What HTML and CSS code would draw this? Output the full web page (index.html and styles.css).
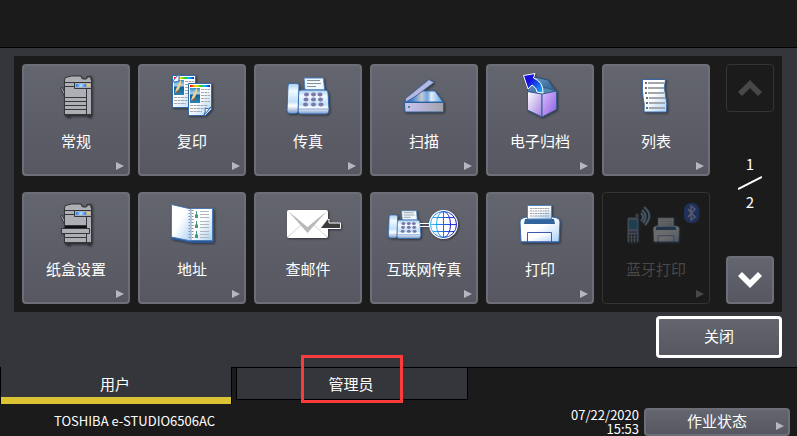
FILE: index.html
```html
<!DOCTYPE html>
<html lang="zh-CN">
<head>
<meta charset="utf-8">
<meta name="viewport" content="width=device-width, initial-scale=1">
<title>用户功能</title>
<link rel="stylesheet" href="styles.css">
</head>
<body>
<svg class="defs" aria-hidden="true">
  <defs>
    <linearGradient id="paper" x2="1" y2="1"><stop offset=".45" stop-color="#fff"/><stop offset="1" stop-color="#a9d0f5"/></linearGradient>
    <linearGradient id="shell" x2="0" y2="1"><stop offset="0" stop-color="#a9cdf2"/><stop offset=".25" stop-color="#f2faff"/><stop offset=".6" stop-color="#c2e0fb"/><stop offset=".75" stop-color="#fff"/><stop offset="1" stop-color="#7596c9"/></linearGradient>
    <linearGradient id="screen"><stop offset="0" stop-color="#2877ed"/><stop offset=".5" stop-color="#b3dcff"/><stop offset="1" stop-color="#2877ed"/></linearGradient>
    <linearGradient id="rainbow"><stop offset="0" stop-color="#f20000"/><stop offset=".3" stop-color="#ffe500"/><stop offset=".55" stop-color="#20cd32"/><stop offset=".75" stop-color="#00bfff"/><stop offset="1" stop-color="#1522dd"/></linearGradient>
    <linearGradient id="glass"><stop offset="0" stop-color="#1c6ad2"/><stop offset=".2" stop-color="#3d80ce"/><stop offset=".45" stop-color="#c5c9cf"/><stop offset=".6" stop-color="#71a5e5"/><stop offset=".7" stop-color="#e2edf8"/><stop offset="1" stop-color="#5e9be2"/></linearGradient>
    <linearGradient id="base"><stop offset="0" stop-color="#c9c3f5"/><stop offset="1" stop-color="#a2a3ac"/></linearGradient>
    <linearGradient id="boxLeft" x2="1" y2="1"><stop offset="0" stop-color="#fff"/><stop offset="1" stop-color="#a27ee0"/></linearGradient>
    <linearGradient id="boxRight" x2="1" y2="1"><stop offset="0" stop-color="#dac0ff"/><stop offset="1" stop-color="#8d5ae0"/></linearGradient>
    <linearGradient id="boxTop" x2="1" y2="1"><stop offset="0" stop-color="#6ca5d6"/><stop offset="1" stop-color="#294d7c"/></linearGradient>
    <linearGradient id="arrow" x2="1" y2="1"><stop offset=".35" stop-color="#1610dc"/><stop offset="1" stop-color="#16baff"/></linearGradient>
    <linearGradient id="globe"><stop offset="0" stop-color="#28b8f5"/><stop offset="1" stop-color="#1b12c6"/></linearGradient>
    <linearGradient id="sea" x2="0" y2="1"><stop offset="0" stop-color="#358ac3"/><stop offset=".35" stop-color="#a9d6ee"/><stop offset=".5" stop-color="#126296"/><stop offset="1" stop-color="#2984b5"/></linearGradient>
    <linearGradient id="tray" x2="1" y2="1"><stop offset=".4" stop-color="#fff"/><stop offset="1" stop-color="#bdd5ff"/></linearGradient>

    <g id="copier-head">
      <path d="M39 24l1-1 3 6v4l-4-8z" fill="#aaabb0" stroke="#414247"/>
      <path d="M42.500 34V16q0-3 3-3l4-1h9l2 3h4l1-2h3l1 2v19z" fill="#aeafb5" stroke="#35363a"/>
      <path d="M43 18.500h27M43 22.500h10M64 13l5-1v4" fill="none" stroke="#35363a"/>
      <path d="M64.500 25v9" stroke="#35363a"/>
      <path d="M52.500 18.500h17v6h-17z" fill="#aeafb5" stroke="#35363a"/>
      <path d="M54 20h10v3H54z" fill="url(#screen)"/><path d="M65 20h3v2h-3z" fill="#ffc74d"/>
    </g>
    <g id="page">
      <path d="M.5.5h23v26l-6 6H.5z" fill="url(#paper)" stroke="#3668a8"/>
      <path d="M2 2h20v2H2z" fill="url(#rainbow)"/>
      <path d="M2 5h10v15H2z" fill="url(#sea)"/>
      <path d="M3 18l1-4 4-8 1-1v5l-3 6z" fill="#f1ce91"/><path d="M3 18l3-3 1 2z" fill="#a64e27"/>
      <path d="M13 6.500h9M13 9.500h8M13 12.500h9M13 15.500h8M13 18.500h9" stroke="#a5a8ae" stroke-dasharray="3 .5"/>
      <path d="M2 22.500h18M2 25.500h14M2 28.500h12" stroke="#a5a8ae" stroke-dasharray="3 .5"/>
    </g>
    <g id="fax">
      <path d="M50 14h19.500l1 12H51z" fill="#eff8ff" stroke="#4d83bd"/>
      <path d="M53 16.500h13M53 19.500h14M53 22.500h9" stroke="#8b8e93"/>
      <path d="M44 29q0-3 3-3h24q3 0 3 3l1 17q0 4-3 4H47q-3 0-3-3z" fill="url(#shell)" stroke="#376dab"/>
      <path d="M35 19.500h8q2 0 2 2l-1 26q0 2-3 2h-5q-3 0-3-3l1-25z" fill="url(#shell)" stroke="#376dab"/>
      <g fill="#7b78aa"><ellipse cx="52.500" cy="30.500" rx="2.500" ry="2"/><ellipse cx="59.500" cy="30.500" rx="2.500" ry="2"/><ellipse cx="66" cy="30.500" rx="2.500" ry="2"/><ellipse cx="52" cy="35.500" rx="2.500" ry="2"/><ellipse cx="59.500" cy="35.500" rx="2.500" ry="2"/><ellipse cx="66.500" cy="35.500" rx="2.500" ry="2"/><ellipse cx="51.500" cy="40.500" rx="2.500" ry="2"/><ellipse cx="59.500" cy="40.500" rx="2.500" ry="2"/><ellipse cx="67" cy="40.500" rx="2.500" ry="2"/></g>
      <path d="M45 45h30" stroke="#87a7d3"/>
    </g>
    <g id="printer">
      <path d="M39 50l-1-20q0-3 3-4l4-1h25l5 1q3 1 3 4l-1 20z" fill="url(#paper)" stroke="#386aac"/>
      <path d="M43 27h29l1 5H42z" fill="#31639d"/>
      <path d="M45.500 13.500h24V27h-24z" fill="url(#paper)" stroke="#5586b9"/>
      <path d="M48 16.500h19M48 19h19M48 21.500h19M48 24h19" stroke="#9da0a4" stroke-dasharray="2 .5"/>
      <path d="M45.500 50v-9.500h24V50z" fill="url(#tray)" stroke="#395caa"/>
      <path d="M39 50h38" stroke="#2e599a"/>
    </g>
  </defs>
</svg>

<header class="topbar"></header>

<main class="main">
  <section class="panel" aria-label="功能菜单">
    <div class="tiles">
      <button class="tile more" type="button">
        <svg class="icon" viewBox="6 8 96 48" aria-hidden="true">
          <use href="#copier-head"/>
          <path d="M42.500 33.500h27V51h-27z" fill="#aeafb5" stroke="#35363a"/>
          <path d="M43 37.500h22M43 41.500h22M43 45.500h22M64.500 28v22" stroke="#35363a"/>
          <path d="M65 27h4v8h-4z" fill="#aeafb5"/>
          <path d="M43 50h27v2l-3 2-2-2H49l-2 2-4-2z" fill="#333438"/>
        </svg>
        <span>常规</span>
      </button>
      <button class="tile more" type="button">
        <svg class="icon" viewBox="6 8 96 48" aria-hidden="true">
          <use href="#page" x="34" y="11"/>
          <path d="M34 18l7-8v6q0 2-7 2z" fill="#f5faff" stroke="#3668a8"/>
          <use href="#page" x="50" y="19"/>
          <path d="M66 51q2-3 1-7 4 2 6-1z" fill="#f5faff" stroke="#3668a8"/>
        </svg>
        <span>复印</span>
      </button>
      <button class="tile more" type="button">
        <svg class="icon" viewBox="6 8 96 48" aria-hidden="true"><use href="#fax"/></svg>
        <span>传真</span>
      </button>
      <button class="tile more" type="button">
        <svg class="icon" viewBox="6 8 96 48" aria-hidden="true">
          <path d="M34 38l17-11h14l8 11z" fill="url(#glass)" stroke="#326cac"/>
          <path d="M35.500 36v-1.500L59 15.500l5 3L46 32 36 38z" fill="#b7b8df" stroke="#3a68a1"/>
          <path d="M34.500 38.500h39V48H35z" fill="url(#base)" stroke="#2c6096"/>
          <path d="M38 42h2v2h-2z" fill="#4d9550"/>
        </svg>
        <span>扫描</span>
      </button>
      <button class="tile more" type="button">
        <svg class="icon" viewBox="10 8 96 48" aria-hidden="true">
          <path d="M45 27l8-14 13 3 8 11-14 4z" fill="url(#boxTop)" stroke="#28537e"/>
          <path d="M53 23l12 1 9 3-14 4z" fill="#5689af" stroke="#335c83"/>
          <path d="M45.500 27.500L60 30v23l-14.500-7z" fill="url(#boxLeft)" stroke="#335c94"/>
          <path d="M60 30l14.500-3v18.500L60 53z" fill="url(#boxRight)" stroke="#335c94"/>
          <path d="M41.500 11.500l11.500-2-1.500 4.500q10 4 9.500 15l-6-1q0-4-5-7l-4 4z" fill="url(#arrow)" stroke="#fff"/>
        </svg>
        <span>电子归档</span>
      </button>
      <button class="tile more" type="button">
        <svg class="icon" viewBox="6 8 96 48" aria-hidden="true">
          <path d="M40.500 15.500h23q-2 8 0 16 2 8 1 16.500H42q1-8-1-15-1-8-.5-17.500z" fill="url(#paper)" stroke="#396aa6"/>
          <path d="M46 19h16M46 24h16M46 29h16M47 34h16M47 39h16M47 44h16" stroke="#a3a6ad" stroke-width="2"/>
          <path d="M43 19h2M43 24h2M43 29h2M44 34h2M44 39h2M44 44h2" stroke="#6a6d73" stroke-width="2"/>
        </svg>
        <span>列表</span>
      </button>

      <button class="tile more" type="button">
        <svg class="icon" viewBox="6 8 96 48" aria-hidden="true">
          <use href="#copier-head"/>
          <path d="M42.500 33.500h27V51h-27z" fill="#aeafb5" stroke="#35363a"/>
          <path d="M65 27h4v8h-4z" fill="#aeafb5"/>
          <path d="M43 34h22v3H43z" fill="#111"/>
          <path d="M39.500 36.500h28v5h-28z" fill="#aeafb5" stroke="#35363a"/>
          <path d="M43 45.500h22M64.500 42v8" stroke="#35363a"/>
          <path d="M43 50h27v2l-3 2-2-2H49l-2 2-4-2z" fill="#333438"/>
        </svg>
        <span>纸盒设置</span>
      </button>
      <button class="tile more" type="button">
        <svg class="icon" viewBox="6 8 96 48" aria-hidden="true">
          <path d="M33.500 46L53 50h22V18" fill="none" stroke="#2a579b" stroke-width="2"/>
          <path d="M33.500 12.500L53 17v32l-19.500-4z" fill="url(#paper)" stroke="#4c7bb2"/>
          <path d="M53 16.500h21.500v32H53z" fill="url(#paper)" stroke="#4c7bb2"/>
          <path d="M53 18v30" stroke="#8d9097" stroke-width="5" stroke-dasharray="1 2"/>
          <path d="M53 17v31" stroke="#dbe7f5"/>
          <path d="M62 19.500h9M62 22.500h9M62 25.500h9M62 29.500h9M62 32.500h9M62 35.500h9M62 39.500h9M62 42.500h9M62 45.500h9" stroke="#b2b5ba"/>
          <path d="M58 19h1v3l1 1v3h-3v-3l1-1zm0 10h1v3l1 1v3h-3v-3l1-1zm0 10h1v3l1 1v3h-3v-3l1-1z" fill="#3f9f70"/>
        </svg>
        <span>地址</span>
      </button>
      <button class="tile" type="button">
        <svg class="icon" viewBox="6 8 96 48" aria-hidden="true">
          <rect x="33" y="18" width="41" height="28" rx="2" fill="#fff"/>
          <path d="M34 45l14-13M73 45L59 32" stroke="#d2d2d2"/>
          <path d="M34 19l19.500 16L73 19 53.500 41z" fill="#b9b9b9"/>
          <path d="M36 18h35L53.500 35z" fill="#fff"/>
          <path d="M67 36l8-9v4h11.500v5.500H67z" fill="#3c3c3c" stroke="#fff"/>
          <path d="M67 36l7-9v9z" fill="#3c3c3c"/>
        </svg>
        <span>查邮件</span>
      </button>
      <button class="tile more" type="button">
        <svg class="icon" viewBox="6 8 96 48" aria-hidden="true">
          <use href="#fax" transform="translate(-7 8) scale(.77)"/>
          <path d="M50 31.500h10M50 34.500h10" stroke="#fff"/>
          <circle cx="73.500" cy="32.500" r="14.500" fill="#fff"/>
          <g fill="none" stroke="url(#globe)"><circle cx="73.500" cy="32.500" r="13"/><ellipse cx="73.500" cy="32.500" rx="7" ry="13"/><path d="M60.500 32.400l26 .2M63 25.400l21 .2M63 39.400l21 .2M73.400 19.500l.2 26"/></g>
        </svg>
        <span>互联网传真</span>
      </button>
      <button class="tile more" type="button">
        <svg class="icon" viewBox="10 8 96 48" aria-hidden="true"><use href="#printer"/></svg>
        <span>打印</span>
      </button>
      <button class="tile more" type="button" disabled>
        <svg class="icon" viewBox="6 8 96 48" aria-hidden="true">
          <path d="M34 28v-6h2v6" fill="#a5b5c5" stroke="#59718b"/>
          <rect x="25.500" y="25.500" width="11" height="25" rx="2" fill="#8fa0b5" stroke="#4a678b"/>
          <path d="M27 28h8v9h-8z" fill="#2784ad"/>
          <path d="M27 40h8" stroke="#7355a0" stroke-width="2"/>
          <path d="M27 43.500h8M27 46.500h8M27 49.500h8" stroke="#263345" stroke-width="2" stroke-dasharray="2 1"/>
          <g fill="none" stroke="#8fc0ee" stroke-width="2"><path d="M39 21q4 4 0 8"/><path d="M40 18q7 6 1 13"/><path d="M42 15q10 8 1 18"/></g>
          <use href="#printer" transform="translate(26 17) scale(.66)"/>
          <rect x="82" y="11" width="15" height="20" rx="7" fill="#2858d8"/>
          <path d="M86 17l7 8-4 3V14l4 3-7 8" fill="none" stroke="#c5d2f5" stroke-width="1.500"/>
        </svg>
        <span>蓝牙打印</span>
      </button>
    </div>

    <nav class="pager" aria-label="翻页">
      <button class="page-button" type="button" aria-label="上一页" disabled>
        <svg class="chevron" viewBox="0 0 24 16" aria-hidden="true"><path d="M12 0l12 12-4 4-8-8-8 8-4-4z"/></svg>
      </button>
      <div class="fraction">
        <span>1</span>
        <svg class="slash" viewBox="0 0 24 14" aria-hidden="true"><path d="M0 13L24 1" stroke="#fff" stroke-width="2"/></svg>
        <span>2</span>
      </div>
      <button class="page-button" type="button" aria-label="下一页">
        <svg class="chevron" viewBox="0 0 24 16" aria-hidden="true"><path d="M12 16L0 4l4-4 8 8 8-8 4 4z"/></svg>
      </button>
    </nav>
  </section>
  <button class="close" type="button">关闭</button>
</main>

<footer class="bottom">
  <div class="tabs" role="tablist">
    <button class="tab selected" type="button" role="tab" aria-selected="true">用户</button>
    <button class="tab" type="button" role="tab" aria-selected="false">管理员<span class="marker"></span></button>
  </div>
  <div class="statusbar">
    <span class="device">TOSHIBA e-STUDIO6506AC</span>
    <time class="clock" datetime="2020-07-22T15:53">07/22/2020<br>15:53</time>
    <button class="status more" type="button">作业状态</button>
  </div>
</footer>
</body>
</html>
```
FILE: styles.css
```css
* { box-sizing: border-box; }

body {
  margin: 0;
  min-height: 100vh;
  display: flex;
  flex-direction: column;
  background: #1b1b1b;
  color: #fff;
  font: 15px/20px "Noto Sans CJK SC", sans-serif;
}

button {
  font: inherit;
  color: inherit;
  margin: 0;
  padding: 0;
  border: 0;
}

.defs { position: absolute; width: 0; height: 0; }

.topbar {
  height: 48px;
  border-bottom: 1px solid #000;
}

.main {
  display: flex;
  flex-direction: column;
  padding: 8px 15px 9px 14px;
  background: #35363b;
}

.panel {
  display: flex;
  gap: 16px;
  padding: 8px;
  background: #1b1b1b;
}

.tiles {
  flex: 1;
  display: grid;
  grid-template-columns: repeat(6, 1fr);
  gap: 16px 8px;
}

.tile, .page-button, .status {
  border: 2px solid #6d6e78;
  border-radius: 4px;
  background: linear-gradient(#64666f, #565761);
}

.tile {
  position: relative;
  display: flex;
  flex-direction: column;
  align-items: center;
  gap: 11px;
  height: 112px;
  padding-top: 6px;
}

.icon {
  width: 96px;
  height: 48px;
  filter: drop-shadow(1px 1px 1px #303138);
}

.more::after {
  content: "";
  position: absolute;
  right: 4px;
  bottom: 4px;
  border: solid transparent;
  border-width: 4px 0 4px 8px;
  border-left-color: #b5b6bf;
}

.tile:disabled, .page-button:disabled {
  border: 1px solid #343434;
  background: none;
  color: #484848;
}

.tile:disabled { padding-top: 7px; }
.tile:disabled .icon { opacity: 0.35; }
.tile:disabled::after { border-left-color: #48484c; right: 5px; bottom: 5px; }

.pager {
  width: 48px;
  display: flex;
  flex-direction: column;
  justify-content: space-between;
}

.page-button {
  display: flex;
  align-items: center;
  justify-content: center;
  height: 48px;
}

.chevron { width: 24px; height: 16px; fill: #fff; }
.page-button:disabled .chevron { fill: #484848; }

.fraction {
  display: flex;
  flex-direction: column;
  align-items: center;
  gap: 2px;
  padding-bottom: 2px;
  font-size: 15px;
}

.slash { width: 24px; height: 14px; }

.close {
  align-self: flex-end;
  width: 126px;
  height: 42px;
  margin-top: 4px;
  padding-bottom: 2px;
  border: 3px solid #fff;
  border-radius: 4px;
  background: linear-gradient(#64666f, #565761);
}

.bottom {
  flex: 1;
  display: flex;
  flex-direction: column;
  border-top: 1px solid #000;
}

.tabs {
  display: flex;
  align-items: flex-start;
  gap: 4px;
  margin-top: -1px;
}

.tab {
  position: relative;
  flex: 0 1 232px;
  height: 33px;
  padding-right: 2px;
  border: 1px solid #000;
  background: #35363b;
}

.tab.selected {
  height: 37px;
  padding-top: 2px;
  border: solid #000;
  border-width: 0 1px;
  box-shadow: inset 0 -7px #dcc334;
  padding-bottom: 6px;
}

.marker {
  position: absolute;
  inset: -13px 64px -4px;
  border: 3px solid #fa3c3c;
}

.statusbar {
  display: flex;
  align-items: flex-start;
  gap: 5px;
  margin-top: 4px;
  padding: 0 7px 0 54px;
  font-size: 13px;
}

.device { margin-right: auto; line-height: 26px; }
.clock { text-align: right; line-height: 14px; }

.status {
  position: relative;
  width: 146px;
  height: 28px;
  padding-bottom: 2px;
  font-size: 15px;
}
```
